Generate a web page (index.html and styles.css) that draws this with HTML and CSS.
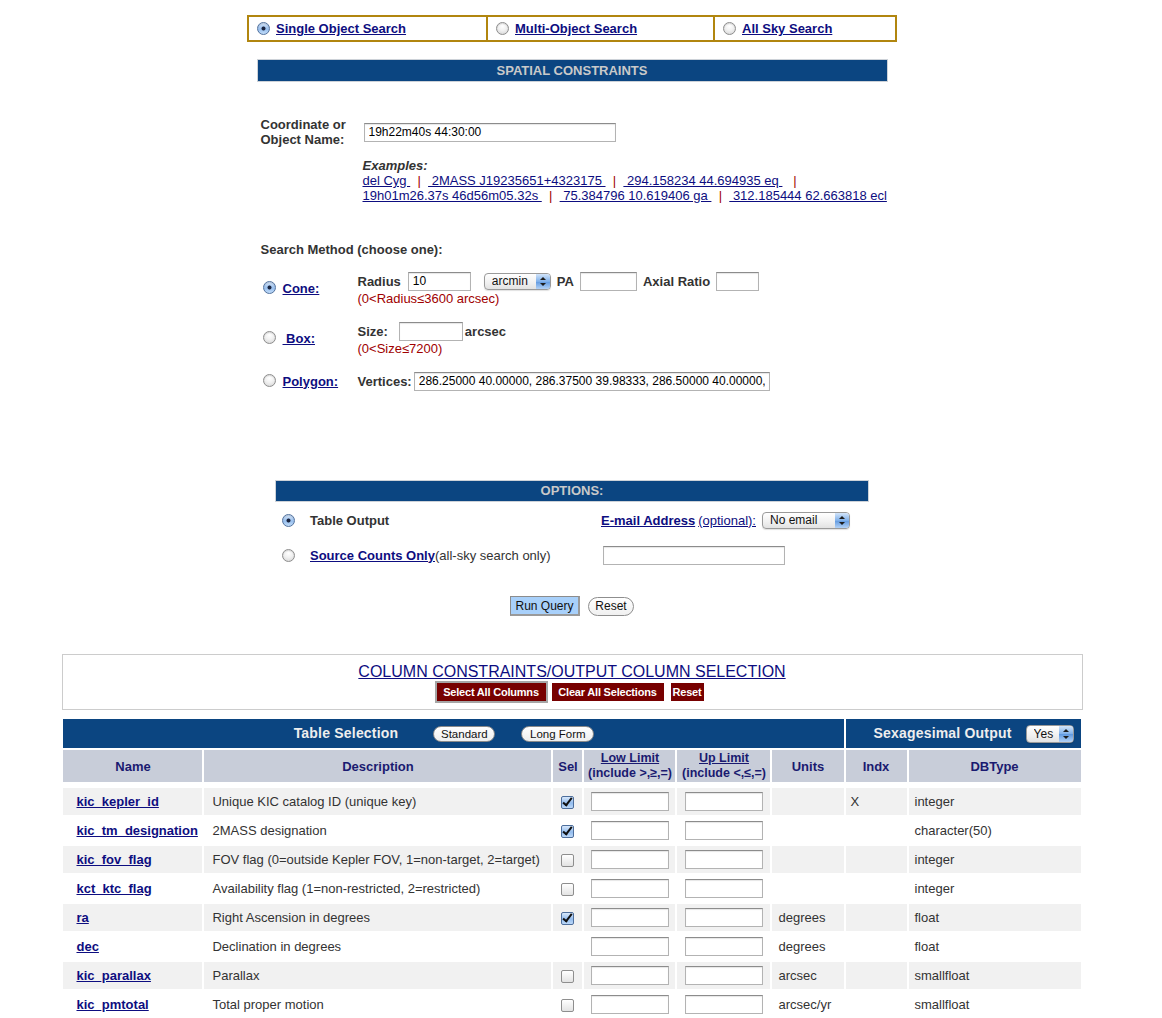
FILE: index.html
```
<!DOCTYPE html>
<html lang="en">
<head>
<meta charset="utf-8">
<title>Kepler Catalog Search</title>
<link rel="stylesheet" href="styles.css">
</head>
<body>
<div class="page">

  <div class="tabs">
    <label class="tab tab1"><input type="radio" class="radio" name="mode" checked><a href="#">Single Object Search</a></label>
    <label class="tab tab2"><input type="radio" class="radio" name="mode"><a href="#">Multi-Object Search</a></label>
    <label class="tab tab3"><input type="radio" class="radio" name="mode"><a href="#">All Sky Search</a></label>
  </div>

  <section class="spatial">
    <h2 class="bar spatial-bar">SPATIAL CONSTRAINTS</h2>

    <div class="coord">
      <label class="coord-label">Coordinate or<br>Object Name:</label>
      <input type="text" class="text coord-input" value="19h22m40s 44:30:00">
    </div>

    <div class="examples">
      <div class="ex-title">Examples:</div>
      <div class="ex-line"><a href="#">del Cyg&nbsp;</a>&nbsp;&nbsp;<span class="sep">|</span>&nbsp;&nbsp;<a href="#">&nbsp;2MASS J19235651+4323175&nbsp;</a>&nbsp;&nbsp;<span class="sep">|</span>&nbsp;&nbsp;<a href="#">&nbsp;294.158234 44.694935 eq&nbsp;</a>&nbsp;&nbsp;&nbsp;<span class="sep">|</span></div>
      <div class="ex-line"><a href="#">19h01m26.37s 46d56m05.32s&nbsp;</a>&nbsp;&nbsp;<span class="sep">|</span>&nbsp;&nbsp;<a href="#">&nbsp;75.384796 10.619406 ga&nbsp;</a>&nbsp;&nbsp;<span class="sep">|</span>&nbsp;&nbsp;<a href="#">&nbsp;312.185444 62.663818 ecl</a></div>
    </div>

    <div class="method-title">Search Method (choose one):</div>

    <div class="methods">
      <input type="radio" class="radio m-radio" name="method" checked>
      <a href="#" class="m-link">Cone:</a>
      <div class="m-body">
        <div class="m-line">
          <span class="lbl">Radius</span>
          <input type="text" class="text radius-in" value="10">
          <span class="popup popup-arcmin"><select><option>arcmin</option></select><span class="arrows"></span></span>
          <span class="lbl pa">PA</span>
          <input type="text" class="text pa-in">
          <span class="lbl axial">Axial Ratio</span>
          <input type="text" class="text axial-in">
        </div>
        <div class="hint">(0&lt;Radius≤3600 arcsec)</div>
      </div>

      <input type="radio" class="radio m-radio" name="method">
      <a href="#" class="m-link">&nbsp;Box:</a>
      <div class="m-body">
        <div class="m-line">
          <span class="lbl">Size:</span>
          <input type="text" class="text size-in">
          <span class="lbl arcsec">arcsec</span>
        </div>
        <div class="hint">(0&lt;Size≤7200)</div>
      </div>

      <input type="radio" class="radio m-radio" name="method">
      <a href="#" class="m-link">Polygon:</a>
      <div class="m-body">
        <div class="m-line">
          <span class="lbl">Vertices:</span>
          <input type="text" class="text vert-in" value="286.25000 40.00000, 286.37500 39.98333, 286.50000 40.00000, 286.37500 40.01667">
        </div>
      </div>
    </div>
  </section>

  <section class="options">
    <h2 class="bar options-bar">OPTIONS:</h2>
    <div class="opt-grid">
      <input type="radio" class="radio" name="out" checked>
      <span class="lbl">Table Output</span>
      <div class="opt-right"><a href="#" class="blink">E-mail Address</a> <a href="#">(optional):</a><span class="popup popup-email"><select><option>No email</option></select><span class="arrows"></span></span></div>

      <input type="radio" class="radio" name="out">
      <span><a href="#" class="blink">Source Counts Only</a>(all-sky search only)</span>
      <div class="opt-right"><input type="text" class="text email-in"></div>
    </div>
  </section>

  <div class="actions">
    <button class="run">Run Query</button>
    <button class="reset">Reset</button>
  </div>

  <div class="colbox">
    <a href="#" class="col-title">COLUMN CONSTRAINTS/OUTPUT COLUMN SELECTION</a>
    <div class="redbtns">
      <button class="redbtn focus">Select All Columns</button>
      <button class="redbtn clear">Clear All Selections</button>
      <button class="redbtn rreset">Reset</button>
    </div>
  </div>

  <table class="cols">
    <colgroup>
      <col class="c-name"><col class="c-desc"><col class="c-sel"><col class="c-low"><col class="c-up"><col class="c-units"><col class="c-indx"><col class="c-type">
    </colgroup>
    <thead>
      <tr class="blue">
        <th colspan="6"><div class="tsel"><span>Table Selection</span><button class="pill pill-std">Standard</button><button class="pill pill-long">Long Form</button></div></th>
        <th colspan="2"><div class="sexa"><span>Sexagesimal Output</span><span class="popup popup-yes"><select><option>Yes</option></select><span class="arrows"></span></span></div></th>
      </tr>
      <tr class="heads">
        <th>Name</th>
        <th>Description</th>
        <th>Sel</th>
        <th class="lim-h"><a href="#">Low Limit</a><br>(include &gt;,≥,=)</th>
        <th class="lim-h"><a href="#">Up Limit</a><br>(include &lt;,≤,=)</th>
        <th>Units</th>
        <th>Indx</th>
        <th>DBType</th>
      </tr>
    </thead>
    <tbody>
      <tr class="odd">
        <td class="name"><a href="#">kic_kepler_id</a></td>
        <td class="desc">Unique KIC catalog ID (unique key)</td>
        <td class="sel"><input type="checkbox" class="cb" checked></td>
        <td class="lim"><input type="text" class="text lim-in"></td>
        <td class="lim"><input type="text" class="text lim-in"></td>
        <td class="units"></td>
        <td class="indx">X</td>
        <td class="type">integer</td>
      </tr>
      <tr>
        <td class="name"><a href="#">kic_tm_designation</a></td>
        <td class="desc">2MASS designation</td>
        <td class="sel"><input type="checkbox" class="cb" checked></td>
        <td class="lim"><input type="text" class="text lim-in"></td>
        <td class="lim"><input type="text" class="text lim-in"></td>
        <td class="units"></td>
        <td class="indx"></td>
        <td class="type">character(50)</td>
      </tr>
      <tr class="odd">
        <td class="name"><a href="#">kic_fov_flag</a></td>
        <td class="desc">FOV flag (0=outside Kepler FOV, 1=non-target, 2=target)</td>
        <td class="sel"><input type="checkbox" class="cb"></td>
        <td class="lim"><input type="text" class="text lim-in"></td>
        <td class="lim"><input type="text" class="text lim-in"></td>
        <td class="units"></td>
        <td class="indx"></td>
        <td class="type">integer</td>
      </tr>
      <tr>
        <td class="name"><a href="#">kct_ktc_flag</a></td>
        <td class="desc">Availability flag (1=non-restricted, 2=restricted)</td>
        <td class="sel"><input type="checkbox" class="cb"></td>
        <td class="lim"><input type="text" class="text lim-in"></td>
        <td class="lim"><input type="text" class="text lim-in"></td>
        <td class="units"></td>
        <td class="indx"></td>
        <td class="type">integer</td>
      </tr>
      <tr class="odd">
        <td class="name"><a href="#">ra</a></td>
        <td class="desc">Right Ascension in degrees</td>
        <td class="sel"><input type="checkbox" class="cb" checked></td>
        <td class="lim"><input type="text" class="text lim-in"></td>
        <td class="lim"><input type="text" class="text lim-in"></td>
        <td class="units">degrees</td>
        <td class="indx"></td>
        <td class="type">float</td>
      </tr>
      <tr>
        <td class="name"><a href="#">dec</a></td>
        <td class="desc">Declination in degrees</td>
        <td class="sel"></td>
        <td class="lim"><input type="text" class="text lim-in"></td>
        <td class="lim"><input type="text" class="text lim-in"></td>
        <td class="units">degrees</td>
        <td class="indx"></td>
        <td class="type">float</td>
      </tr>
      <tr class="odd">
        <td class="name"><a href="#">kic_parallax</a></td>
        <td class="desc">Parallax</td>
        <td class="sel"><input type="checkbox" class="cb"></td>
        <td class="lim"><input type="text" class="text lim-in"></td>
        <td class="lim"><input type="text" class="text lim-in"></td>
        <td class="units">arcsec</td>
        <td class="indx"></td>
        <td class="type">smallfloat</td>
      </tr>
      <tr>
        <td class="name"><a href="#">kic_pmtotal</a></td>
        <td class="desc">Total proper motion</td>
        <td class="sel"><input type="checkbox" class="cb"></td>
        <td class="lim"><input type="text" class="text lim-in"></td>
        <td class="lim"><input type="text" class="text lim-in"></td>
        <td class="units">arcsec/yr</td>
        <td class="indx"></td>
        <td class="type">smallfloat</td>
      </tr>
    </tbody>
  </table>

</div>
</body>
</html>
```

FILE: styles.css
```
html, body {
  margin: 0;
  padding: 0;
  background: #fff;
}
body {
  font-family: "Liberation Sans", Arial, Helvetica, sans-serif;
  font-size: 13px;
  line-height: 15px;
  color: #333;
}
.page {
  width: 1144px;
}
a {
  color: #0d0d80;
  text-decoration: underline;
}

/* ---------- form primitives ---------- */
.radio {
  -webkit-appearance: none;
  appearance: none;
  box-sizing: border-box;
  width: 13px;
  height: 13px;
  margin: 0;
  border-radius: 50%;
  border: 1px solid #8d8d8d;
  background: radial-gradient(circle at 50% 30%, #ffffff 0, #f1f1f1 45%, #d2d2d2 100%);
  box-shadow: inset 0 1px 1px rgba(0,0,0,0.12);
  flex: none;
}
.radio:checked {
  border-color: #52729e;
  background:
    radial-gradient(circle, #1a2540 0, #1a2540 1.6px, rgba(26,37,64,0) 2.4px),
    linear-gradient(#d6e6f9, #98bfee 55%, #c0dbf8);
}
.cb {
  -webkit-appearance: none;
  appearance: none;
  box-sizing: border-box;
  position: relative;
  width: 13px;
  height: 13px;
  margin: 0;
  border: 1px solid #8e8e8e;
  border-radius: 2px;
  background: linear-gradient(#ffffff, #e3e3e3);
  vertical-align: middle;
}
.cb:checked {
  border-color: #4d6e9c;
  background: linear-gradient(#d8e8fb, #93bcee 55%, #bcd8f8);
}
.cb:checked::after {
  content: "";
  position: absolute;
  left: 3px;
  top: -1px;
  width: 3px;
  height: 8px;
  border: solid #111;
  border-width: 0 2.5px 2.5px 0;
  transform: rotate(38deg);
}
.text {
  box-sizing: border-box;
  height: 19px;
  margin: 0;
  padding: 0 4px;
  border: 1px solid #b3b3b3;
  border-top-color: #8c8c8c;
  box-shadow: inset 0 1px 1px rgba(0,0,0,0.10);
  background: #fff;
  font-family: "Liberation Sans", Arial, sans-serif;
  font-size: 12px;
  color: #000;
  outline: none;
}
.popup {
  position: relative;
  display: inline-block;
  vertical-align: middle;
}
.popup select {
  -webkit-appearance: none;
  appearance: none;
  box-sizing: border-box;
  display: block;
  height: 17px;
  margin: 0;
  padding: 0 0 0 7px;
  border: 1px solid #9a9a9a;
  border-radius: 4px;
  background: linear-gradient(#ffffff, #f0f0f0 60%, #e2e2e2);
  font-family: "Liberation Sans", Arial, sans-serif;
  font-size: 12px;
  color: #111;
  box-shadow: 0 1px 1px rgba(0,0,0,0.12);
}
.popup .arrows {
  position: absolute;
  right: 1px;
  top: 1px;
  bottom: 1px;
  width: 14px;
  border-radius: 0 3px 3px 0;
  background: linear-gradient(#d3e5fa, #7fb0ea 50%, #5f98df 51%, #b3d2f6);
  pointer-events: none;
}
.popup .arrows::before,
.popup .arrows::after {
  content: "";
  position: absolute;
  left: 4px;
  border-left: 3px solid transparent;
  border-right: 3px solid transparent;
}
.popup .arrows::before {
  top: 3px;
  border-bottom: 3px solid #1c1c1c;
}
.popup .arrows::after {
  bottom: 3px;
  border-top: 3px solid #1c1c1c;
}

/* ---------- top tabs ---------- */
.tabs {
  display: flex;
  box-sizing: border-box;
  width: 650px;
  height: 27px;
  margin: 15px auto 0;
  border: 2px solid #b1860f;
}
.tab {
  display: flex;
  align-items: center;
  gap: 6px;
  padding-left: 8px;
  box-sizing: border-box;
  font-weight: bold;
  font-size: 13px;
}
.tab1 { width: 237px; }
.tab2 { width: 227px; border-left: 2px solid #b1860f; }
.tab3 { flex: 1; border-left: 2px solid #b1860f; }

/* ---------- section bars ---------- */
.bar {
  box-sizing: border-box;
  margin: 0 auto;
  background: #0b4581;
  color: #c9c9c9;
  font-size: 13px;
  font-weight: bold;
  text-align: center;
  border: 1px solid #cdd2d8;
}
.spatial {
  width: 631px;
  margin: 0 auto;
}
.spatial-bar {
  width: 631px;
  height: 23px;
  line-height: 21px;
  margin-top: 17px;
}

/* ---------- spatial constraints ---------- */
.coord {
  display: flex;
  align-items: center;
  margin: 35px 0 0 4px;
}
.coord-label {
  width: 103px;
  font-weight: bold;
}
.coord-input {
  width: 252px;
}
.examples {
  margin: 11px 0 0 106px;
  font-size: 13px;
}
.ex-title {
  font-weight: bold;
  font-style: italic;
}
.ex-line {
  white-space: nowrap;
}
.sep {
  color: #a00000;
}
.method-title {
  margin: 39px 0 0 4px;
  font-weight: bold;
}
.methods {
  display: grid;
  grid-template-columns: 22px 75px auto;
  row-gap: 15px;
  align-items: center;
  margin: 14px 0 0 4px;
}
.m-radio {
  margin-left: 2px;
  position: relative;
  top: -1px;
}
.m-link {
  font-weight: bold;
}
.m-line {
  display: flex;
  align-items: center;
  height: 20px;
  white-space: nowrap;
}
.lbl {
  font-weight: bold;
}
.hint {
  color: #a00000;
}
.radius-in { width: 63px; margin-left: 7px; }
.popup-arcmin { margin-left: 13px; }
.popup-arcmin select { width: 67px; }
.pa { margin-left: 6px; }
.pa-in { width: 57px; margin-left: 6px; }
.axial { margin-left: 6px; }
.axial-in { width: 43px; margin-left: 6px; }
.size-in { width: 64px; margin-left: 11px; }
.arcsec { margin-left: 2px; }
.vert-in { width: 356px; margin-left: 2px; }

/* ---------- options ---------- */
.options {
  width: 594px;
  margin: 89px auto 0;
}
.options-bar {
  width: 594px;
  height: 22px;
  line-height: 20px;
}
.opt-grid {
  display: grid;
  grid-template-columns: 35px 291px auto;
  grid-auto-rows: 20px;
  row-gap: 15px;
  align-items: center;
  margin-top: 8px;
}
.opt-grid .radio {
  margin-left: 7px;
}
.blink {
  font-weight: bold;
}
.opt-right {
  display: flex;
  align-items: center;
  white-space: nowrap;
}
.opt-right > a + a { margin-left: 3px; }
.popup-email { margin-left: 6px; }
.popup-email select { width: 88px; }
.email-in { width: 182px; margin-left: 2px; }

.actions {
  display: flex;
  justify-content: center;
  align-items: center;
  gap: 8px;
  margin-top: 31px;
}
.run {
  box-sizing: border-box;
  width: 70px;
  height: 20px;
  margin: 0;
  padding: 0;
  background: #a8d0fa;
  border: 1px solid #8c8c8c;
  border-right: 2px solid #9a9a9a;
  border-bottom: 2px solid #9a9a9a;
  font-family: "Liberation Sans", Arial, sans-serif;
  font-size: 12px;
  color: #111;
}
.reset {
  box-sizing: border-box;
  width: 46px;
  height: 19px;
  margin: 0;
  padding: 0;
  background: linear-gradient(#ffffff, #f0f0f0);
  border: 1px solid #8e8e8e;
  border-radius: 10px;
  font-family: "Liberation Sans", Arial, sans-serif;
  font-size: 12px;
  color: #111;
}

/* ---------- column constraints ---------- */
.colbox {
  box-sizing: border-box;
  width: 1021px;
  height: 56px;
  margin: 38px auto 0;
  border: 1px solid #cccccc;
  text-align: center;
  padding-top: 8px;
}
.col-title {
  display: inline-block;
  font-size: 16px;
  line-height: 18px;
}
.redbtns {
  display: flex;
  justify-content: center;
  align-items: center;
  height: 22px;
  margin-top: 0;
  padding-right: 6px;
}
.redbtn {
  box-sizing: border-box;
  height: 18px;
  margin: 0;
  padding: 0;
  background: #770000;
  color: #fff;
  border: 0;
  font-family: "Liberation Sans", Arial, sans-serif;
  font-size: 11px;
  font-weight: bold;
  letter-spacing: -0.2px;
}
.redbtn.focus {
  width: 113px;
  height: 22px;
  border: 2px solid #a6a6a6;
}
.redbtn.clear {
  width: 112px;
  margin-left: 4px;
}
.redbtn.rreset {
  width: 33px;
  margin-left: 7px;
}

/* ---------- table ---------- */
.cols {
  table-layout: fixed;
  width: 1021px;
  margin: 7px auto 0;
  border-collapse: separate;
  border-spacing: 2px;
}
.c-name { width: 139px; }
.c-desc { width: 347px; }
.c-sel { width: 29px; }
.c-low { width: 91px; }
.c-up { width: 93px; }
.c-units { width: 71px; }
.c-indx { width: 61px; }
.c-type { width: 172px; }

.cols th, .cols td {
  padding: 0;
  white-space: nowrap;
  overflow: hidden;
}
.blue th {
  height: 29px;
  background: #0b4581;
  color: #eeeeee;
  font-size: 14px;
  letter-spacing: 0.2px;
}
.tsel {
  display: flex;
  align-items: center;
  justify-content: center;
  padding-right: 19px;
}
.tsel .pill-std { margin-left: 35px; }
.tsel .pill-long { margin-left: 26px; }
.sexa {
  display: flex;
  align-items: center;
  justify-content: center;
  padding-left: 21px;
}
.popup-yes { margin-left: 14px; }
.popup-yes select { width: 48px; height: 18px; letter-spacing: 0; }
.pill {
  box-sizing: border-box;
  height: 16px;
  margin: 0;
  padding: 0;
  background: linear-gradient(#ffffff, #eeeeee);
  border: 1px solid #8a8a8a;
  border-radius: 8px;
  font-family: "Liberation Sans", Arial, sans-serif;
  font-size: 11.5px;
  letter-spacing: 0;
  color: #111;
}
.pill-std { width: 62px; }
.pill-long { width: 73px; }

.heads th {
  height: 32px;
  background: #c8cdd9;
  color: #1a1a70;
  font-size: 13px;
  text-align: center;
  border-bottom: 4px solid #fff;
}
.heads th.lim-h {
  font-size: 12.5px;
  line-height: 15px;
}
.heads th.lim-h a {
  color: #1a1a70;
}
.cols td {
  height: 27px;
  font-size: 13px;
  color: #333;
}
.cols tr.odd td {
  background: #f1f1f1;
}
.name { padding-left: 13px !important; font-weight: bold; }
.desc { padding-left: 8px !important; }
.sel { text-align: center; }
.lim { text-align: center; }
.lim-in { width: 78px; vertical-align: middle; }
.units { padding-left: 6px !important; }
.indx { padding-left: 5px !important; }
.type { padding-left: 6px !important; }
```
